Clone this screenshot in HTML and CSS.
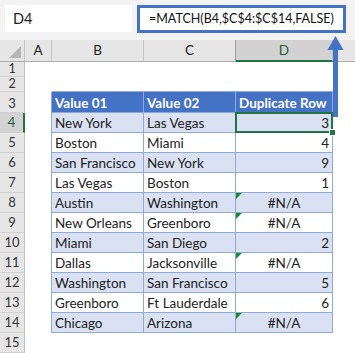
FILE: index.html
```html
<!doctype html>
<html lang="en">
<head>
	<meta charset="UTF-8">
	<title>MATCH duplicates</title>
	<link rel="stylesheet" href="styles.css">
</head>
<body>
	<div class="toolbar">
		<div class="name-box">D4</div>
		<div class="formula-box">=MATCH(B4,$C$4:$C$14,FALSE)</div>
	</div>
	<div class="sheet">
		<div class="row col-head">
			<div class="cell corner"></div>
			<div class="cell a">A</div>
			<div class="cell b">B</div>
			<div class="cell c">C</div>
			<div class="cell d active">D</div>
			<div class="cell e"></div>
		</div>
		<div class="row r1">
			<div class="cell rh">1</div><div class="cell a"></div><div class="cell b"></div><div class="cell c"></div><div class="cell d"></div><div class="cell e"></div>
		</div>
		<div class="row r2">
			<div class="cell rh">2</div><div class="cell a"></div><div class="cell b top"></div><div class="cell c top"></div><div class="cell d top"></div><div class="cell e"></div>
		</div>
		<div class="row r3">
			<div class="cell rh">3</div><div class="cell a edge"></div>
			<div class="cell b th">Value 01</div>
			<div class="cell c th">Value 02</div>
			<div class="cell d th">Duplicate Row</div>
			<div class="cell e"></div>
		</div>
		<div class="row band">
			<div class="cell rh active">4</div><div class="cell a edge"></div>
			<div class="cell b td">New York</div><div class="cell c td">Las Vegas</div><div class="cell d td num selected">3</div><div class="cell e"></div>
		</div>
		<div class="row">
			<div class="cell rh">5</div><div class="cell a edge"></div>
			<div class="cell b td">Boston</div><div class="cell c td">Miami</div><div class="cell d td num">4</div><div class="cell e"></div>
		</div>
		<div class="row band">
			<div class="cell rh">6</div><div class="cell a edge"></div>
			<div class="cell b td">San Francisco</div><div class="cell c td">New York</div><div class="cell d td num">9</div><div class="cell e"></div>
		</div>
		<div class="row">
			<div class="cell rh">7</div><div class="cell a edge"></div>
			<div class="cell b td">Las Vegas</div><div class="cell c td">Boston</div><div class="cell d td num">1</div><div class="cell e"></div>
		</div>
		<div class="row band">
			<div class="cell rh">8</div><div class="cell a edge"></div>
			<div class="cell b td">Austin</div><div class="cell c td">Washington</div><div class="cell d td na">#N/A</div><div class="cell e"></div>
		</div>
		<div class="row">
			<div class="cell rh">9</div><div class="cell a edge"></div>
			<div class="cell b td">New Orleans</div><div class="cell c td">Greenboro</div><div class="cell d td na">#N/A</div><div class="cell e"></div>
		</div>
		<div class="row band">
			<div class="cell rh">10</div><div class="cell a edge"></div>
			<div class="cell b td">Miami</div><div class="cell c td">San Diego</div><div class="cell d td num">2</div><div class="cell e"></div>
		</div>
		<div class="row">
			<div class="cell rh">11</div><div class="cell a edge"></div>
			<div class="cell b td">Dallas</div><div class="cell c td">Jacksonville</div><div class="cell d td na">#N/A</div><div class="cell e"></div>
		</div>
		<div class="row band">
			<div class="cell rh">12</div><div class="cell a edge"></div>
			<div class="cell b td">Washington</div><div class="cell c td">San Francisco</div><div class="cell d td num">5</div><div class="cell e"></div>
		</div>
		<div class="row">
			<div class="cell rh">13</div><div class="cell a edge"></div>
			<div class="cell b td">Greenboro</div><div class="cell c td">Ft Lauderdale</div><div class="cell d td num">6</div><div class="cell e"></div>
		</div>
		<div class="row band">
			<div class="cell rh">14</div><div class="cell a edge"></div>
			<div class="cell b td">Chicago</div><div class="cell c td">Arizona</div><div class="cell d td na">#N/A</div><div class="cell e"></div>
		</div>
		<div class="row">
			<div class="cell rh">15</div><div class="cell a"></div><div class="cell b"></div><div class="cell c"></div><div class="cell d"></div><div class="cell e"></div>
		</div>
	</div>
	<svg class="arrow" width="17" height="82" viewBox="0 0 17 82">
		<polygon points="8.5,0 16.5,14 11,14 11,81 6,81 6,14 0.5,14" fill="#4472c4"/>
	</svg>
</body>
</html>
```

FILE: styles.css
```css
html,
body{
	margin: 0;
	width: 355px;
	height: 353px;
	overflow: hidden;
	background: #fff;
}
body{
	position: relative;
	font: 13.5px Lato, 'Liberation Sans', sans-serif;
	color: #222;
}
.toolbar{
	display: flex;
	gap: 5px;
	height: 40px;
	padding: 5px 0 0 5px;
	box-sizing: border-box;
	background: #f3f3f3;
}
.name-box{
	width: 127px;
	height: 27px;
	padding-left: 8px;
	box-sizing: border-box;
	background: #fff;
	line-height: 27px;
	font-size: 14.5px;
	color: #222;
}
.formula-box{
	width: 209px;
	height: 28px;
	padding-left: 9px;
	box-sizing: border-box;
	border: 3px solid #4472c4;
	background: #fff;
	line-height: 22px;
	font-size: 12.5px;
	color: #111;
}
.row{
	display: flex;
	height: 20px;
}
.cell{
	position: relative;
	box-sizing: border-box;
	height: 100%;
	line-height: 19px;
	white-space: nowrap;
	overflow: visible;
}
.corner{ width: 25px; }
.a{ width: 27px; }
.b{ width: 92px; }
.c{ width: 92px; }
.d{ width: 97px; }
.e{ flex: 1; }

/* column letters */
.col-head{
	height: 22px;
}
.col-head .cell{
	background: #e6e6e6;
	border-right: 1px solid #c4c4c4;
	border-bottom: 1px solid #ababab;
	text-align: center;
	line-height: 21px;
	font-size: 13.5px;
	color: #222;
}
.col-head .e{
	border-right: 0;
}
.col-head .c{
	border-right-color: #9f9f9f;
}
.col-head .active{
	background: #d2d2d2;
	border-bottom: 2px solid #217346;
	color: #1c5e37;
}
.corner::after{
	content: "";
	position: absolute;
	right: 3px;
	bottom: 3px;
	border-style: solid;
	border-width: 0 0 12px 12px;
	border-color: transparent transparent #b5b5b5 transparent;
}

/* row numbers */
.rh{
	width: 25px;
	background: #e6e6e6;
	border-right: 1px solid #c4c4c4;
	border-bottom: 1px solid #d0d0d0;
	text-align: center;
	font-size: 13px;
	color: #333;
}
.rh.active{
	background: #d2d2d2;
	border-right: 2px solid #217346;
	color: #1c5e37;
}
.r1{ height: 15px; }
.r1 .cell{ line-height: 14px; }
.r2{ height: 15px; }
.r2 .cell{ line-height: 14px; }
.r1 .rh,
.r2 .rh{ font-size: 12.5px; }
.r3{ height: 21px; }
.r3 .rh{ line-height: 22px; }

/* table */
.top{
	border-bottom: 1px solid #8ea9db;
}
.edge{
	border-right: 1px solid #8ea9db;
}
.th,
.td{
	padding: 0 3px;
	border-right: 1px solid #8ea9db;
	border-bottom: 1px solid #8ea9db;
}
.th{
	background: #4472c4;
	color: #fff;
	font-weight: bold;
	line-height: 22px;
}
.band .td{
	background: #d9e1f2;
}
.td{
	line-height: 20px;
}
.num{
	text-align: right;
}
.na{
	text-align: center;
}
.na::before{
	content: "";
	position: absolute;
	left: 0;
	top: 0;
	border-style: solid;
	border-width: 6px 6px 0 0;
	border-color: #1e8a2e transparent transparent transparent;
}
.selected::after{
	content: "";
	position: absolute;
	left: -1px;
	top: -1px;
	right: -1px;
	bottom: -1px;
	border: 2px solid #217346;
}
.selected::before{
	content: "";
	position: absolute;
	right: -4px;
	bottom: -4px;
	width: 5px;
	height: 5px;
	background: #217346;
	border: 1px solid #fff;
	z-index: 1;
}
.arrow{
	position: absolute;
	left: 327px;
	top: 36px;
}
```
